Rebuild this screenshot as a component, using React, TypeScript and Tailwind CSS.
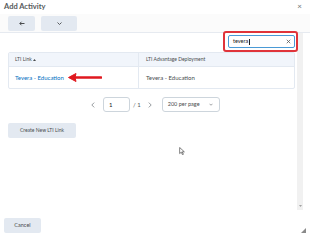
export default function App() {
  return (
    <div className="relative flex h-[240px] w-[310px] flex-col overflow-hidden bg-white font-['Lato','Open_Sans',sans-serif] text-[#494c4e]">
      {/* title */}
      <div className="flex h-[14px] items-start justify-between pl-[4px] pr-[8px] pt-[1px]">
        <h1 className="text-[7.5px] font-bold leading-[11px] text-[#565a5c]">Add Activity</h1>
        <span className="text-[8px] leading-[11px] text-[#6e7376]">×</span>
      </div>

      {/* toolbar */}
      <div className="flex h-[19px] items-center gap-[6px] border-b border-[#e6eaf0] bg-[#fbfbfb] pl-[8px] pt-[1px]">
        <button className="flex h-[15px] w-[27px] items-center justify-center rounded-[2px] bg-[#e3e9f1]">
          <svg width="6" height="5" viewBox="0 0 12 10" fill="none" stroke="#494c4e" strokeWidth="2">
            <path d="M11 5H2M5 1.5L1.5 5 5 8.5" />
          </svg>
        </button>
        <button className="flex h-[15px] w-[36px] items-center justify-center rounded-[2px] bg-[#e3e9f1]">
          <svg width="5" height="3" viewBox="0 0 10 6" fill="none" stroke="#494c4e" strokeWidth="1.8">
            <path d="M1 1l4 4 4-4" />
          </svg>
        </button>
      </div>

      {/* body */}
      <div className="flex h-[180px]">
        <div className="flex-1">
          {/* search */}
          <div className="flex justify-end pr-[2px] pt-[2px]">
            <div className="relative">
              <div className="pointer-events-none absolute -bottom-[4px] -left-[5px] -right-[3px] -top-[4px] rounded-[3px] border-2 border-[#e0343a]" />
              <div className="flex h-[13px] w-[67px] items-center justify-between rounded-[2px] border border-[#4a9ad6] bg-white pl-[4px] pr-[3px]">
                <span className="text-[5.5px] leading-none text-[#202122]">
                  tevera<span className="ml-[0.5px] inline-block h-[6px] w-[0.6px] bg-[#202122] align-middle" />
                </span>
                <svg width="5" height="5" viewBox="0 0 10 10" stroke="#565a5c" strokeWidth="1.6">
                  <path d="M1.5 1.5l7 7M8.5 1.5l-7 7" />
                </svg>
              </div>
            </div>
          </div>

          {/* table */}
          <div className="ml-[8px] mr-[2px] mt-[4px] rounded-[2px] border border-[#e3e9f1]">
            <div className="flex h-[13px] bg-[#f1f5fb] text-[5px] leading-none text-[#494c4e]">
              <div className="flex w-[130px] items-center gap-[1.5px] border-r border-[#e3e9f1] pl-[6px]">
                LTI Link
                <svg width="3" height="2" viewBox="0 0 6 4" fill="#494c4e">
                  <path d="M3 0l3 4H0z" />
                </svg>
              </div>
              <div className="flex flex-1 items-center pl-[7px]">LTI Advantage Deployment</div>
            </div>
            <div className="flex h-[22px] border-t border-[#e3e9f1] text-[6px] leading-none">
              <div className="flex w-[130px] items-center border-r border-[#e3e9f1] pl-[6px]">
                <span className="text-[#006fbf]">Tevera - Education</span>
                <svg className="ml-[4px]" width="34" height="9" viewBox="0 0 34 9" fill="none">
                  <path d="M4 4.5H33" stroke="#e0181f" strokeWidth="2.6" strokeLinecap="round" />
                  <path d="M0.5 4.5L8 0.5 7 4.5 8 8.5z" fill="#e0181f" stroke="#e0181f" strokeLinejoin="round" />
                </svg>
              </div>
              <div className="flex flex-1 items-center pl-[7px] text-[#494c4e]">Tevera - Education</div>
            </div>
          </div>

          {/* pagination */}
          <div className="mt-[8px] flex h-[15px] items-center pl-[91px] text-[6px] leading-none">
            <svg width="4" height="6" viewBox="0 0 6 10" fill="none" stroke="#8a8f93" strokeWidth="1.5">
              <path d="M5 1L1 5l4 4" />
            </svg>
            <div className="ml-[8px] flex h-[15px] w-[27px] items-center rounded-[3px] border border-[#cdd5dc] pl-[5px] text-[#202122]">
              1
            </div>
            <span className="ml-[3px] text-[#565a5c]">/ 1</span>
            <svg className="ml-[7px]" width="4" height="6" viewBox="0 0 6 10" fill="none" stroke="#8a8f93" strokeWidth="1.5">
              <path d="M1 1l4 4-4 4" />
            </svg>
            <div className="ml-[10px] flex h-[15px] w-[58px] items-center justify-between rounded-[3px] border border-[#cdd5dc] pl-[5px] pr-[6px] text-[5.5px] text-[#494c4e]">
              200 per page
              <svg width="4" height="3" viewBox="0 0 8 5" fill="none" stroke="#6e7376" strokeWidth="1.3">
                <path d="M1 1l3 3 3-3" />
              </svg>
            </div>
          </div>

          {/* create */}
          <div className="mt-[11px] pl-[8px]">
            <button className="flex h-[15px] w-[68px] items-center justify-center rounded-[2px] bg-[#e3e9f1] text-[5px] leading-none text-[#494c4e]">
              Create New LTI Link
            </button>
          </div>
        </div>

        {/* scrollbar */}
        <div className="mr-[7px] flex h-[177px] w-[6px] flex-col items-center justify-end bg-[#f1f1f1] pb-[3px]">
          <svg width="3" height="2" viewBox="0 0 6 4" fill="#a3a3a3">
            <path d="M0 0h6L3 4z" />
          </svg>
        </div>
      </div>

      {/* footer */}
      <div className="flex flex-1 items-end justify-between pb-[7px] pl-[4px] pr-[4px]">
        <button className="flex h-[15px] w-[37px] items-center justify-center rounded-[2px] bg-[#e3e9f1] text-[5.5px] leading-none text-[#494c4e]">
          Cancel
        </button>
        <svg width="5" height="5" viewBox="0 0 10 10" fill="#8a8a8a">
          <path d="M10 0L10 10 0 10z" />
        </svg>
      </div>

      {/* mouse cursor */}
      <svg className="pointer-events-none absolute left-[179px] top-[147px]" width="6" height="8" viewBox="0 0 12 17">
        <path d="M1 1v13l3.5-3 2.5 5.5 2-1-2.5-5.2H11z" fill="#fff" stroke="#333" strokeWidth="1.3" strokeLinejoin="round" />
      </svg>
    </div>
  );
}
